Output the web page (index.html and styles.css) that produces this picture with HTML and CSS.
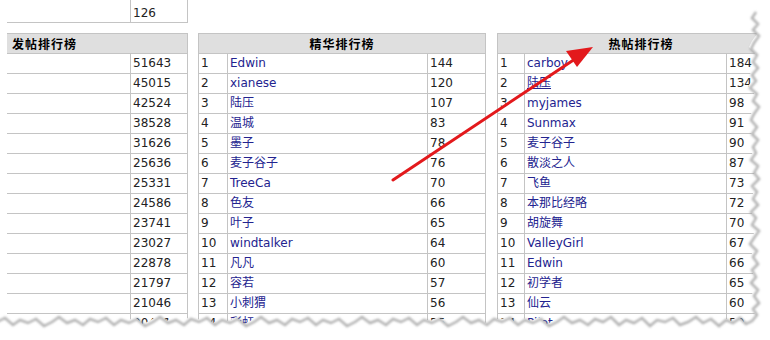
FILE: index.html
```html
<!DOCTYPE html>
<html lang="zh-CN">
<head>
<meta charset="utf-8">
<title>排行榜</title>
<link rel="stylesheet" href="styles.css">
</head>
<body>
<div class="page">
  <div class="grid g1 top">
    <div class="c"></div><div class="c num">126</div>
  </div>

  <div class="boards">
    <div class="grid g1 board b1">
      <div class="head left">发帖排行榜</div>
      <div class="c"></div><div class="c">51643</div>
      <div class="c"></div><div class="c">45015</div>
      <div class="c"></div><div class="c">42524</div>
      <div class="c"></div><div class="c">38528</div>
      <div class="c"></div><div class="c">31626</div>
      <div class="c"></div><div class="c">25636</div>
      <div class="c"></div><div class="c">25331</div>
      <div class="c"></div><div class="c">24586</div>
      <div class="c"></div><div class="c">23741</div>
      <div class="c"></div><div class="c">23027</div>
      <div class="c"></div><div class="c">22878</div>
      <div class="c"></div><div class="c">21797</div>
      <div class="c"></div><div class="c">21046</div>
      <div class="c"></div><div class="c">20441</div>
    </div>

    <div class="grid g2 board b2">
      <div class="head">精华排行榜</div>
      <div class="c">1</div><div class="c"><a class="name">Edwin</a></div><div class="c">144</div>
      <div class="c">2</div><div class="c"><a class="name">xianese</a></div><div class="c">120</div>
      <div class="c">3</div><div class="c"><a class="name">陆压</a></div><div class="c">107</div>
      <div class="c">4</div><div class="c"><a class="name">温城</a></div><div class="c">83</div>
      <div class="c">5</div><div class="c"><a class="name">墨子</a></div><div class="c">78</div>
      <div class="c">6</div><div class="c"><a class="name">麦子谷子</a></div><div class="c">76</div>
      <div class="c">7</div><div class="c"><a class="name">TreeCa</a></div><div class="c">70</div>
      <div class="c">8</div><div class="c"><a class="name">色友</a></div><div class="c">66</div>
      <div class="c">9</div><div class="c"><a class="name">叶子</a></div><div class="c">65</div>
      <div class="c">10</div><div class="c"><a class="name">windtalker</a></div><div class="c">64</div>
      <div class="c">11</div><div class="c"><a class="name">凡凡</a></div><div class="c">60</div>
      <div class="c">12</div><div class="c"><a class="name">容若</a></div><div class="c">57</div>
      <div class="c">13</div><div class="c"><a class="name">小刺猬</a></div><div class="c">56</div>
      <div class="c">14</div><div class="c"><a class="name">彩虹</a></div><div class="c">55</div>
    </div>

    <div class="grid g3 board b3">
      <div class="head">热帖排行榜</div>
      <div class="c">1</div><div class="c"><a class="name">carboy</a></div><div class="c">184</div>
      <div class="c">2</div><div class="c"><a class="name hover">陆压</a></div><div class="c">134</div>
      <div class="c">3</div><div class="c"><a class="name">myjames</a></div><div class="c">98</div>
      <div class="c">4</div><div class="c"><a class="name">Sunmax</a></div><div class="c">91</div>
      <div class="c">5</div><div class="c"><a class="name">麦子谷子</a></div><div class="c">90</div>
      <div class="c">6</div><div class="c"><a class="name">散淡之人</a></div><div class="c">87</div>
      <div class="c">7</div><div class="c"><a class="name">飞鱼</a></div><div class="c">73</div>
      <div class="c">8</div><div class="c"><a class="name">本那比经略</a></div><div class="c">72</div>
      <div class="c">9</div><div class="c"><a class="name">胡旋舞</a></div><div class="c">70</div>
      <div class="c">10</div><div class="c"><a class="name">ValleyGirl</a></div><div class="c">67</div>
      <div class="c">11</div><div class="c"><a class="name">Edwin</a></div><div class="c">66</div>
      <div class="c">12</div><div class="c"><a class="name">初学者</a></div><div class="c">65</div>
      <div class="c">13</div><div class="c"><a class="name">仙云</a></div><div class="c">60</div>
      <div class="c">14</div><div class="c"><a class="name">Pilot</a></div><div class="c">59</div>
    </div>
  </div>

  <svg class="overlay arrow" width="770" height="340" viewBox="0 0 770 340" aria-hidden="true">
    <line x1="393" y1="180" x2="575" y2="59" stroke="#e3191c" stroke-width="3" stroke-linecap="round"/>
    <polygon points="593,47 577,67 566,51" fill="#e3191c"/>
  </svg>

  <svg class="overlay torn" width="770" height="340" viewBox="0 0 770 340" aria-hidden="true">
    <defs>
      <filter id="soft" x="-10%" y="-10%" width="120%" height="120%">
        <feGaussianBlur stdDeviation="1.2"/>
      </filter>
    </defs>
    <path fill="#ffffff" d="M754,-5 L754,10 L750,16 L756,22 L751,28 L757,34 L752,41 L749,47 L755,53 L751,60 L756,66 L750,73 L754,79 L748,86 L755,92 L751,99 L757,105 L752,112 L749,118 L755,125 L750,132 L756,138 L751,145 L754,151 L749,158 L756,164 L752,171 L757,177 L750,184 L755,190 L751,197 L756,203 L749,210 L754,216 L750,223 L757,229 L752,236 L748,242 L755,249 L751,255 L756,262 L750,268 L754,275 L749,281 L756,288 L752,294 L757,301 L751,307 L755,313 L750,319 L744,322 L738,316 L731,321 L724,318 L717,324 L709,317 L701,321 L694,315 L686,320 L678,323 L671,316 L663,320 L655,318 L648,324 L640,316 L632,321 L624,318 L617,323 L609,315 L601,320 L593,317 L586,323 L578,318 L570,321 L562,315 L555,320 L547,324 L539,317 L531,321 L523,318 L516,323 L508,316 L500,320 L492,317 L485,323 L477,318 L469,321 L461,315 L454,320 L446,324 L438,317 L430,321 L422,318 L415,323 L407,316 L399,320 L391,317 L384,323 L376,318 L368,321 L360,315 L353,320 L345,324 L337,317 L329,321 L321,318 L314,323 L306,316 L298,320 L290,317 L283,323 L275,318 L267,321 L259,315 L252,320 L244,324 L236,317 L228,321 L220,318 L213,323 L205,316 L197,320 L189,317 L182,323 L174,318 L166,321 L158,315 L151,320 L143,324 L135,317 L127,321 L119,318 L112,323 L104,316 L96,320 L88,317 L81,323 L73,318 L65,321 L57,315 L50,320 L42,324 L34,317 L26,321 L18,318 L11,323 L3,316 L-5,320 L-5,345 L775,345 L775,-5 Z"/>
    <polyline transform="translate(2,2)" filter="url(#soft)" fill="none" stroke="#9a9a9a" stroke-width="2.5" stroke-opacity="0.75" points="754,10 750,16 756,22 751,28 757,34 752,41 749,47 755,53 751,60 756,66 750,73 754,79 748,86 755,92 751,99 757,105 752,112 749,118 755,125 750,132 756,138 751,145 754,151 749,158 756,164 752,171 757,177 750,184 755,190 751,197 756,203 749,210 754,216 750,223 757,229 752,236 748,242 755,249 751,255 756,262 750,268 754,275 749,281 756,288 752,294 757,301 751,307 755,313 750,319 744,322 738,316 731,321 724,318 717,324 709,317 701,321 694,315 686,320 678,323 671,316 663,320 655,318 648,324 640,316 632,321 624,318 617,323 609,315 601,320 593,317 586,323 578,318 570,321 562,315 555,320 547,324 539,317 531,321 523,318 516,323 508,316 500,320 492,317 485,323 477,318 469,321 461,315 454,320 446,324 438,317 430,321 422,318 415,323 407,316 399,320 391,317 384,323 376,318 368,321 360,315 353,320 345,324 337,317 329,321 321,318 314,323 306,316 298,320 290,317 283,323 275,318 267,321 259,315 252,320 244,324 236,317 228,321 220,318 213,323 205,316 197,320 189,317 182,323 174,318 166,321 158,315 151,320 143,324 135,317 127,321 119,318 112,323 104,316 96,320 88,317 81,323 73,318 65,321 57,315 50,320 42,324 34,317 26,321 18,318 11,323 3,316 -5,320"/>
  </svg>
</div>
</body>
</html>
```

FILE: styles.css
```css
html, body {
  margin: 0;
  padding: 0;
  background: #ffffff;
  overflow: hidden;
}

.page {
  position: relative;
  width: 770px;
  height: 340px;
  overflow: hidden;
  padding-left: 7px;
  box-sizing: border-box;
  font-family: "DejaVu Sans", "Noto Sans CJK SC", sans-serif;
  font-size: 12px;
  color: #222222;
}

.grid {
  display: grid;
}

.g1 { grid-template-columns: 124px 57px; }
.g2 { grid-template-columns: 29px 200px 58px; }
.g3 { grid-template-columns: 27px 202px 58px; }

.c {
  box-sizing: border-box;
  height: 20px;
  line-height: 19px;
  padding: 0 0 0 2px;
  border-right: 1px solid #c4c4c4;
  border-bottom: 1px solid #c4c4c4;
  white-space: nowrap;
  overflow: hidden;
}

.top {
  width: 181px;
  margin-bottom: 10px;
}

.top .c {
  height: 23px;
  line-height: 26px;
}

.boards {
  display: flex;
  align-items: flex-start;
  gap: 10px;
}

.board {
  border-top: 1px solid #c4c4c4;
  flex: none;
}

.b2, .b3 {
  border-left: 1px solid #c4c4c4;
}

.b3 {
  margin-left: 1px;
}

.head {
  grid-column: 1 / -1;
  box-sizing: border-box;
  height: 20px;
  line-height: 19px;
  background: #dfdfdf;
  border-right: 1px solid #c4c4c4;
  border-bottom: 1px solid #c4c4c4;
  font-family: "Noto Sans CJK SC", sans-serif;
  font-weight: bold;
  font-size: 12px;
  letter-spacing: 1px;
  color: #000000;
  text-align: center;
}

.head.left {
  text-align: left;
  padding-left: 5px;
}

.name {
  color: #23238f;
  text-decoration: none;
}

.name.hover {
  text-decoration: underline;
}

.overlay {
  position: absolute;
  left: 0;
  top: 0;
  pointer-events: none;
}
```
